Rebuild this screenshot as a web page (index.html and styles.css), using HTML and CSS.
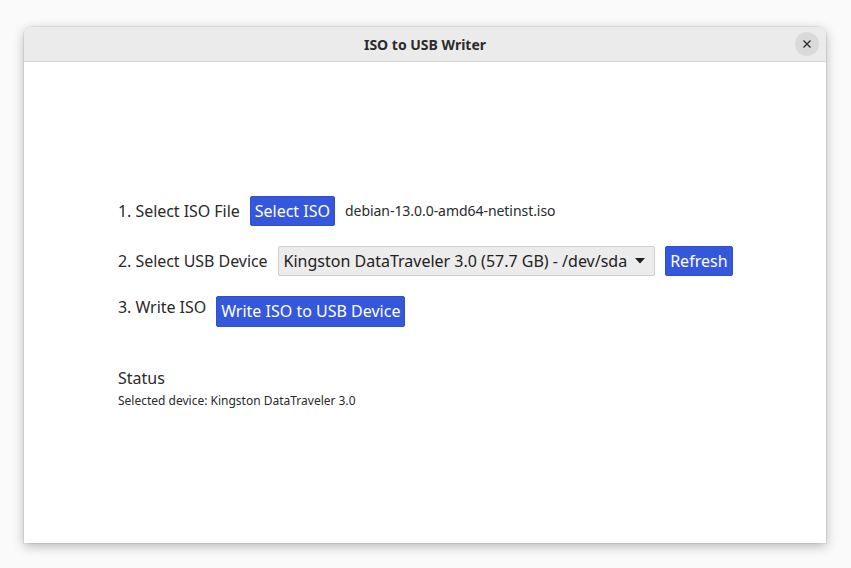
FILE: index.html
```html
<!DOCTYPE html>
<html>
<head>
<meta charset="utf-8">
<link rel="stylesheet" href="styles.css">
</head>
<body>
<div class="window">
  <div class="titlebar">
    <span class="title">ISO to USB Writer</span>
    <button class="close" aria-label="Close">
      <svg width="10" height="10" viewBox="0 0 10 10"><path d="M1.5 1.5 L8.5 8.5 M8.5 1.5 L1.5 8.5" stroke="#2e2e2e" stroke-width="1.4" fill="none"/></svg>
    </button>
  </div>
  <div class="content">
    <div class="form">
      <div class="row">
        <span class="label">1. Select ISO File</span>
        <button class="btn">Select ISO</button>
        <span class="file">debian-13.0.0-amd64-netinst.iso</span>
      </div>
      <div class="row">
        <span class="label">2. Select USB Device</span>
        <div class="combo">
          <span>Kingston DataTraveler 3.0 (57.7 GB) - /dev/sda</span>
          <svg width="10" height="6" viewBox="0 0 10 6"><path d="M0 0 H10 L5 5.5 Z" fill="#1e1e1e"/></svg>
        </div>
        <button class="btn">Refresh</button>
      </div>
      <div class="row row-top">
        <span class="label">3. Write ISO</span>
        <button class="btn btn-write">Write ISO to USB Device</button>
      </div>
      <div class="status">
        <div class="status-title">Status</div>
        <div class="status-text">Selected device: Kingston DataTraveler 3.0</div>
      </div>
    </div>
  </div>
</div>
</body>
</html>
```
FILE: styles.css
```css
html, body {
  margin: 0;
  padding: 0;
  background: #fafafa;
  font-family: "Noto Sans", "Open Sans", sans-serif;
  color: #2a2a2a;
}
body {
  padding: 27px 25px 25px 24px;
}
.window {
  width: 802px;
  height: 516px;
  background: #ffffff;
  border-radius: 8px 8px 0 0;
  box-shadow: 0 3px 12px rgba(0,0,0,0.28), 0 0 0 1px rgba(0,0,0,0.06);
  display: flex;
  flex-direction: column;
  overflow: hidden;
}
.titlebar {
  height: 34px;
  flex: none;
  background: #ebebeb;
  border-bottom: 1px solid #d6d6d6;
  display: flex;
  align-items: center;
  justify-content: center;
  position: relative;
}
.title {
  font-size: 14px;
  font-weight: 700;
  color: #2b2b2b;
}
.close {
  position: absolute;
  right: 7px;
  top: 5px;
  width: 24px;
  height: 24px;
  border-radius: 50%;
  border: none;
  background: #dadada;
  display: flex;
  align-items: center;
  justify-content: center;
  padding: 0;
}
.content {
  flex: 1;
  display: flex;
  flex-direction: column;
  justify-content: center;
  padding: 0 0 0 94px;
}
.form {
  display: flex;
  flex-direction: column;
  gap: 20px;
}
.row {
  display: flex;
  align-items: center;
  gap: 10px;
  height: 30px;
  font-size: 16px;
}
.row-top {
  align-items: flex-start;
  height: 31px;
}
.row-top .label {
  line-height: 22px;
}
.label {
  color: #2a2a2a;
  letter-spacing: -0.05px;
}
.btn {
  font-family: inherit;
  font-size: 16px;
  color: #ffffff;
  background: #3557dc;
  border: 1px solid #2f4fcc;
  border-radius: 2px;
  height: 30px;
  padding: 0 4px;
  line-height: 28px;
}
.btn-write {
  height: 31px;
}
.file {
  font-size: 14px;
  color: #2a2a2a;
  letter-spacing: -0.05px;
}
.combo {
  display: flex;
  align-items: center;
  gap: 8px;
  height: 30px;
  box-sizing: border-box;
  padding: 0 9px 0 5px;
  background: #ececec;
  border: 1px solid #cfcfcf;
  border-radius: 2px;
  color: #222;
  font-size: 16px;
}
.status {
  margin-top: 20px;
}
.status-title {
  font-size: 16px;
  line-height: 22px;
}
.status-text {
  font-size: 12px;
  line-height: 18px;
  margin-top: 3px;
}
```
